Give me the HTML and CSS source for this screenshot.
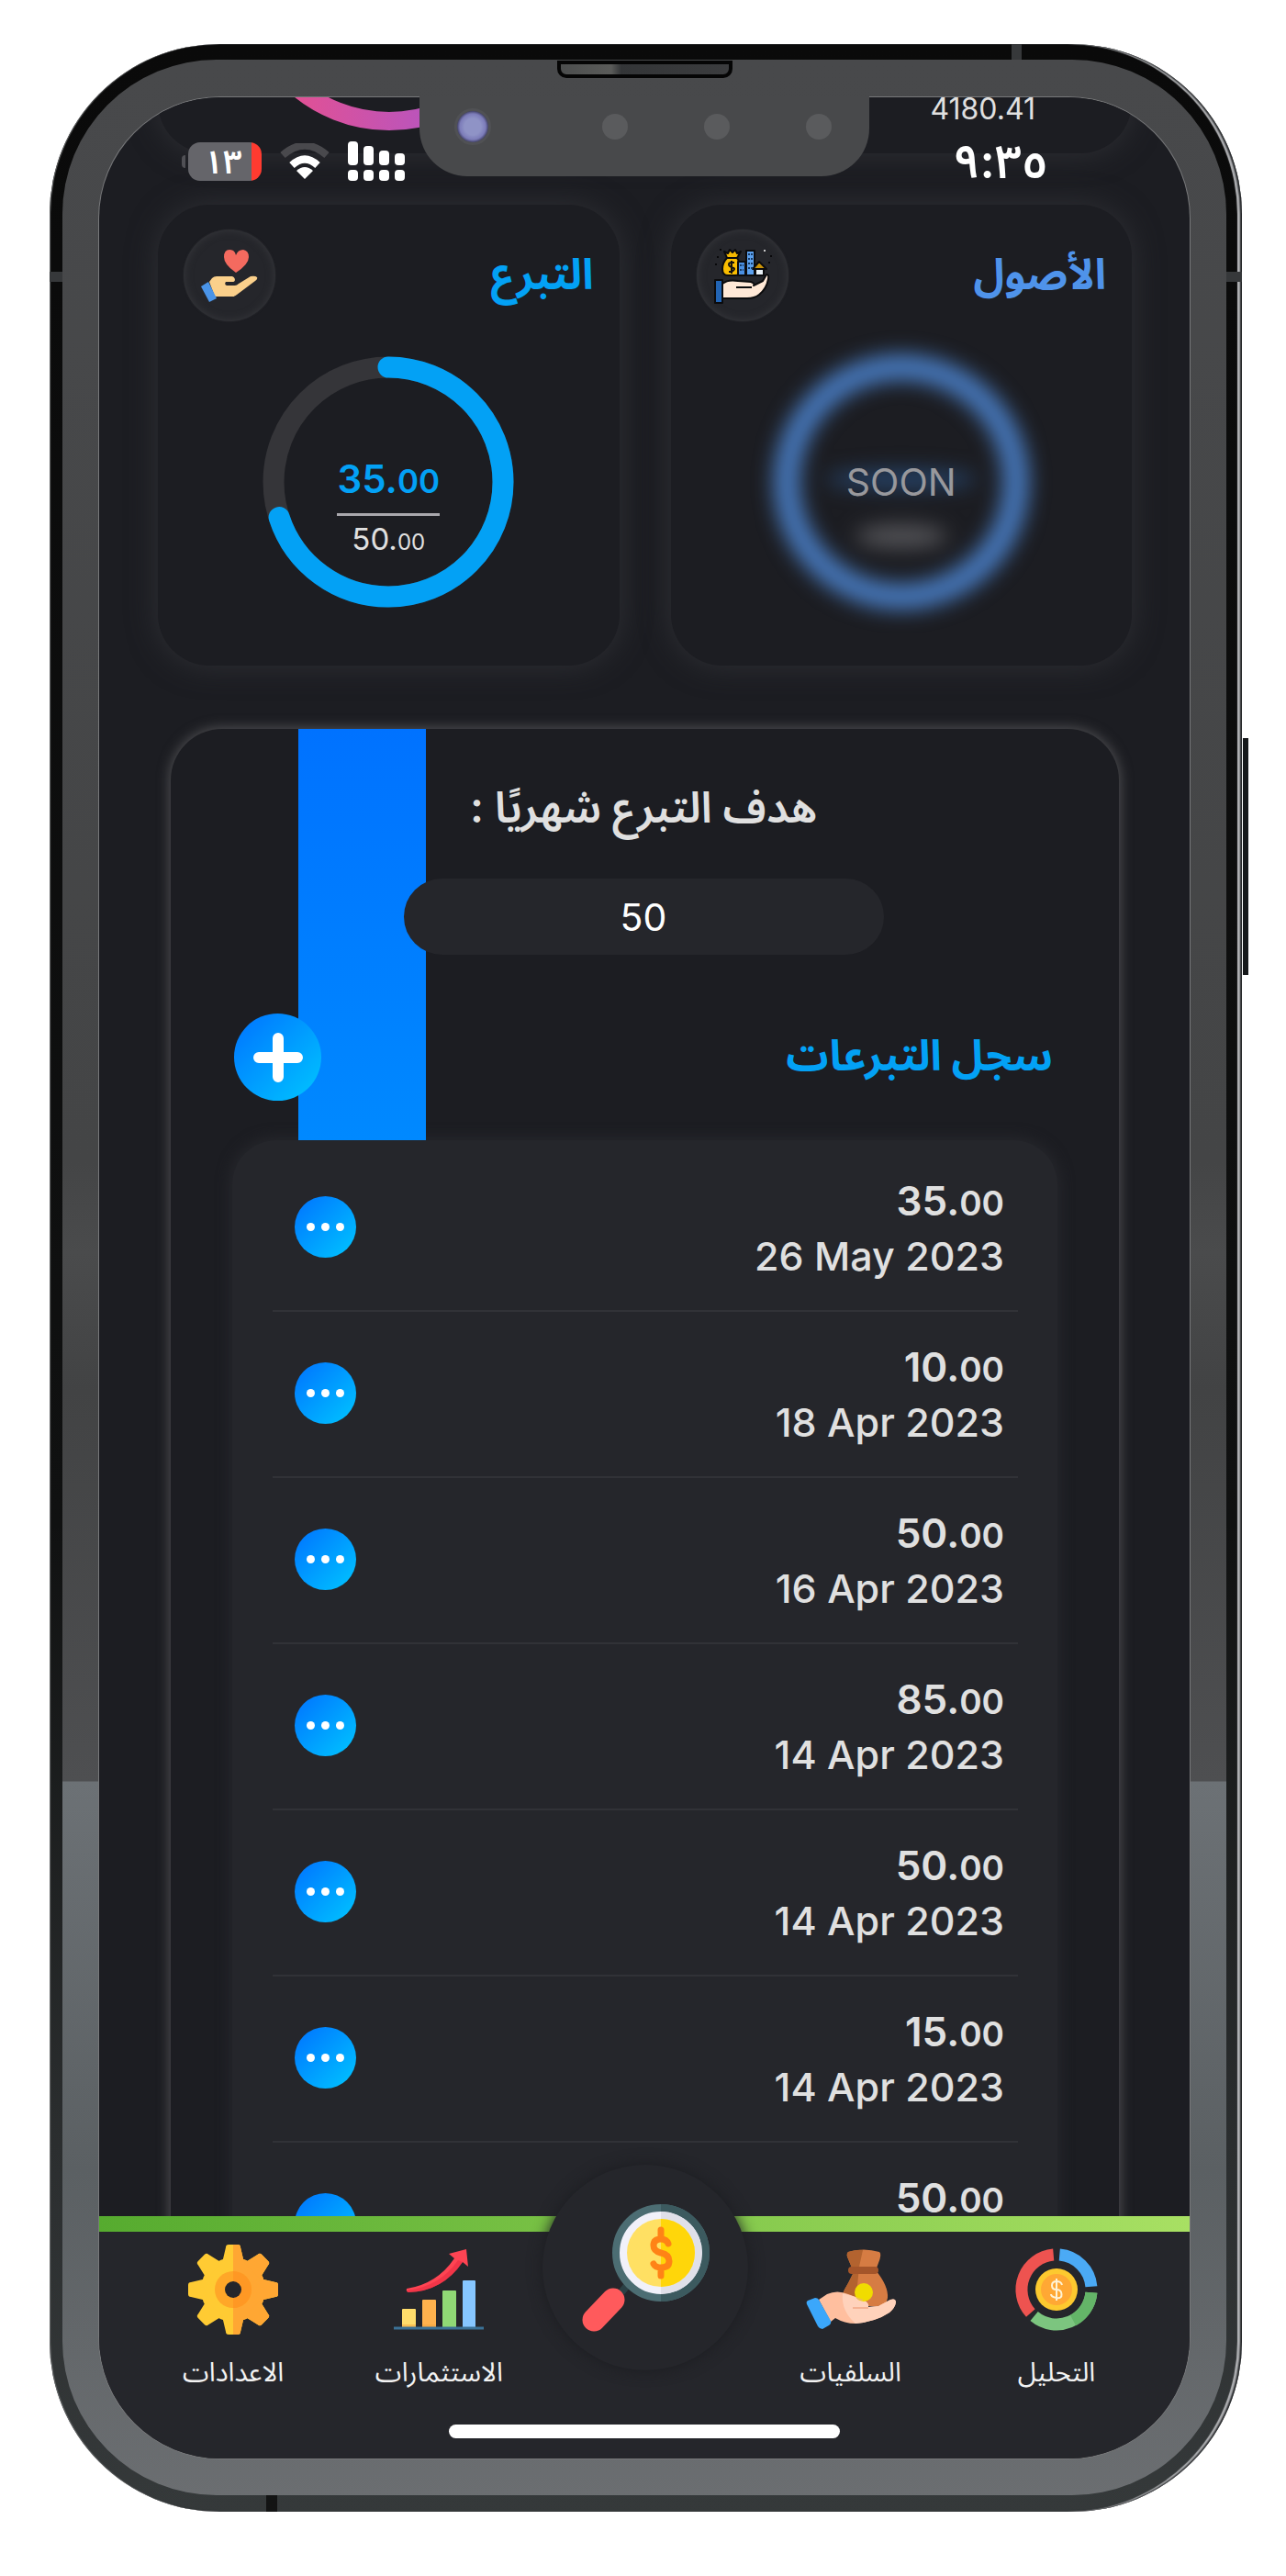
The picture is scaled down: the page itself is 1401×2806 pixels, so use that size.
FILE: index.html
```html
<!DOCTYPE html>
<html lang="ar" dir="rtl">
<head>
<meta charset="utf-8">
<meta name="viewport" content="width=device-width, initial-scale=1">
<title>التبرع</title>
<link rel="stylesheet" href="styles.css">
</head>
<body>
<svg class="defs" width="0" height="0" aria-hidden="true">
  <defs>
    <linearGradient id="pink" x1="0" y1="0" x2="1" y2="0">
      <stop offset="0" stop-color="#f04f86"/><stop offset="1" stop-color="#9a58dc"/>
    </linearGradient>
    <clipPath id="right-half"><rect x="49" y="0" width="49" height="98"/></clipPath>
    <g id="gear-shape">
      <circle cx="49" cy="49" r="35"/>
      <path id="tooth" d="M37 20 41 3Q41 0 44 0H54Q57 0 57 3L61 20Z"/>
      <use href="#tooth" transform="rotate(45 49 49)"/>
      <use href="#tooth" transform="rotate(90 49 49)"/>
      <use href="#tooth" transform="rotate(135 49 49)"/>
      <use href="#tooth" transform="rotate(180 49 49)"/>
      <use href="#tooth" transform="rotate(225 49 49)"/>
      <use href="#tooth" transform="rotate(270 49 49)"/>
      <use href="#tooth" transform="rotate(315 49 49)"/>
    </g>
  </defs>
</svg>

<div class="phone">
  <span class="band band-top"></span>
  <span class="band band-left"></span>
  <span class="band band-right"></span>
  <span class="band band-bottom"></span>
  <span class="side-button"></span>
  <div class="bezel">
    <span class="speaker"></span>
    <div class="screen">
      <main class="scroll">
        <section class="card summary">
          <p class="summary-total">4180.41</p>
          <svg class="summary-ring" viewBox="0 0 330 330" aria-hidden="true">
            <circle cx="165" cy="165" r="155" fill="none" stroke="url(#pink)" stroke-width="20"/>
          </svg>
        </section>

        <div class="cards">
          <section class="card tile">
            <header class="tile-head">
              <h2 class="tile-title tile-title-assets">الأصول</h2>
              <span class="badge">
                <svg viewBox="0 0 100 100" aria-hidden="true">
                  <g stroke="#0b0b0d" stroke-width="2" stroke-linejoin="round">
                    <path d="M33 31 30 24 34 26 36 22 39 25 42 22 44 26 48 24 44 31Z" fill="#f5b800"/>
                    <path d="M33 31H44Q48 37 48 43 48 50 42 50H34Q28 50 28 43 28 36 33 31Z" fill="#f9bd00"/>
                    <path d="M45 35H53V50H45Z" fill="#4a90e2"/>
                    <path d="M54 23H63V50H54Z" fill="#5ba0ee"/>
                    <path d="M64 43H73V50H64Z" fill="#e8f0f5"/>
                    <path d="M61 43 68 35 76 43Z" fill="#c99208"/>
                    <path d="M28 59Q34 54 45 56L59 57Q64 59 62 61L72 56 76 49Q79 49 78 54 76 65 68 71 63 75 55 75H28Z" fill="#ffe8d6"/>
                    <path d="M20 55H28V80H20Z" fill="#2264b4"/>
                    <path d="M43 63H60" fill="none"/>
                  </g>
                  <path d="M56 27H61M56 32H61M56 37H61M56 42H61M47 39H51M47 44H51" stroke="#173b66" stroke-width="2" stroke-dasharray="2 1"/>
                  <path d="M41 36H38Q35 36 35 38T38 41 41 43 38 46H35M38 34V48" fill="none" stroke="#111" stroke-width="2"/>
                  <circle cx="74" cy="23" r="1" fill="#fff"/>
                  <path d="M22 30H24M20 38H22M80 29H82M78 36H80M25 22H27" stroke="#08080a" stroke-width="2"/>
                </svg>
              </span>
            </header>
            <div class="gauge">
              <svg class="gauge-ring gauge-blurred" viewBox="0 0 330 330" aria-hidden="true">
                <circle cx="165" cy="165" r="125" fill="none" stroke="#4779bd" stroke-width="28"/>
                <ellipse cx="165" cy="162" rx="82" ry="10" fill="#27466e"/>
                <ellipse cx="165" cy="224" rx="50" ry="13" fill="#525256"/>
              </svg>
              <p class="soon">SOON</p>
            </div>
          </section>

          <section class="card tile">
            <header class="tile-head">
              <h2 class="tile-title">التبرع</h2>
              <span class="badge">
                <svg viewBox="0 0 100 100" aria-hidden="true">
                  <path d="M57 47Q44 38 44 30 44 22 50 22 56 22 57 28 59 22 65 22 71 23 71 30 71 38 57 47Z" fill="#f46a5f"/>
                  <path d="M28 57 31 53Q33 51 36 51H53Q56 52 56 55 56 57 53 57H46Q44 60 47 61H56Q58 61 60 59L73 51Q78 50 80 52 81 54 78 56L58 71Q56 73 53 73H34Z" fill="#fbd08b"/>
                  <path d="M19 62 27 57 36 75 28 79Z" fill="#4a94e8"/>
                </svg>
              </span>
            </header>
            <div class="gauge">
              <svg class="gauge-ring" viewBox="0 0 330 330" aria-hidden="true">
                <circle cx="165" cy="165" r="125" fill="none" stroke="#353539" stroke-width="23"/>
                <circle cx="165" cy="165" r="125" fill="none" stroke="#03a1f5" stroke-width="23" stroke-linecap="round" pathLength="100" stroke-dasharray="70 100" transform="rotate(-90 165 165)"/>
              </svg>
              <p class="ratio" dir="ltr">
                <strong class="ratio-value">35.<small>00</small></strong>
                <span class="ratio-goal">50.<small>00</small></span>
              </p>
            </div>
          </section>
        </div>

        <section class="panel">
          <div class="panel-head">
            <label class="goal-label" for="goal">هدف التبرع شهريًا :</label>
            <input class="goal-input" id="goal" type="text" inputmode="numeric" value="50">
            <div class="log-head">
              <h2 class="log-title">سجل التبرعات</h2>
              <button class="add" type="button" aria-label="إضافة">
                <svg viewBox="0 0 54 54" aria-hidden="true"><path d="M27 6V48M6 27H48" stroke="#fff" stroke-width="12" stroke-linecap="round"/></svg>
              </button>
            </div>
          </div>
          <ul class="log">
            <li class="entry">
              <p class="entry-text" dir="ltr"><strong>35.<small>00</small></strong><span>26 May 2023</span></p>
              <button class="more" type="button" aria-label="المزيد"><i></i><i></i><i></i></button>
            </li>
            <li class="entry">
              <p class="entry-text" dir="ltr"><strong>10.<small>00</small></strong><span>18 Apr 2023</span></p>
              <button class="more" type="button" aria-label="المزيد"><i></i><i></i><i></i></button>
            </li>
            <li class="entry">
              <p class="entry-text" dir="ltr"><strong>50.<small>00</small></strong><span>16 Apr 2023</span></p>
              <button class="more" type="button" aria-label="المزيد"><i></i><i></i><i></i></button>
            </li>
            <li class="entry">
              <p class="entry-text" dir="ltr"><strong>85.<small>00</small></strong><span>14 Apr 2023</span></p>
              <button class="more" type="button" aria-label="المزيد"><i></i><i></i><i></i></button>
            </li>
            <li class="entry">
              <p class="entry-text" dir="ltr"><strong>50.<small>00</small></strong><span>14 Apr 2023</span></p>
              <button class="more" type="button" aria-label="المزيد"><i></i><i></i><i></i></button>
            </li>
            <li class="entry">
              <p class="entry-text" dir="ltr"><strong>15.<small>00</small></strong><span>14 Apr 2023</span></p>
              <button class="more" type="button" aria-label="المزيد"><i></i><i></i><i></i></button>
            </li>
            <li class="entry">
              <p class="entry-text" dir="ltr"><strong>50.<small>00</small></strong></p>
              <button class="more" type="button" aria-label="المزيد"><i></i><i></i><i></i></button>
            </li>
          </ul>
        </section>
      </main>

      <nav class="tabs">
        <div class="tab-row">
          <a class="tab" href="#analysis">
            <svg viewBox="0 0 98 98" aria-hidden="true">
              <g fill="none" stroke-width="13" transform="translate(49 49)">
                <path d="M3.300 -37.900A38 38 0 0 1 37.900 -3.300" stroke="#4baaf5"/>
                <path d="M37.900 3.300A38 38 0 0 1 -24.400 29.100" stroke="#7cc57f"/>
                <path d="M37.900 3.300A38 38 0 0 1 18 33.500" stroke="#64b568"/>
                <path d="M-28.200 25.500A38 38 0 0 1 -3.300 -37.900" stroke="#ee5350"/>
              </g>
              <circle cx="49" cy="49" r="23" fill="#fdc92f"/>
              <circle cx="49" cy="49" r="17" fill="#ffa834"/>
              <path d="M55 44Q54 40 49 40 44 40 44 44.500T49 49 54.500 54 49 58 43 54M49 37V61" fill="none" stroke="#fff3d6" stroke-width="2"/>
            </svg>
            <span>التحليل</span>
          </a>
          <a class="tab" href="#loans">
            <svg viewBox="0 0 98 98" aria-hidden="true">
              <path d="M46 8Q63 3 80 8 83 10 79 20L76 28Q90 45 89 58 88 67 78 67H38Q37 56 46 42L52 30 47 18Q43 10 46 8Z" fill="#d67c43"/>
              <path d="M46 8Q55 5 62 6L58 24 56 45 54 67H38Q37 56 46 42L52 30 47 18Q43 10 46 8Z" fill="#b3632f"/>
              <rect x="46" y="24" width="33" height="8" rx="4" fill="#a4552a"/>
              <path d="M14 60 23 54Q34 49 46 54L62 60Q69 63 68 68L79 67 92 60Q98 58 98 63 97 69 91 74 76 84 54 86 42 86 32 80L27 84Z" fill="#ffbf9f"/>
              <path d="M40 53Q55 57 62 60 69 63 68 68L79 67 92 60Q98 58 98 63 97 69 91 74 76 84 54 86 38 72 40 53Z" fill="#ffd2bb"/>
              <circle cx="63" cy="52" r="10" fill="#f0dc00"/>
              <path d="M54 57 63 60Q58 63 54 57Z" fill="#eebe50"/>
              <path d="M51 69H68" stroke="#f5b293" stroke-width="2"/>
              <path d="M2 61 10 58Q13 58 14 60L27 83Q28 86 25 88L18 92Q15 92 13 89L1 65Q0 62 2 61Z" fill="#3ba7fb"/>
            </svg>
            <span>السلفيات</span>
          </a>
          <a class="tab tab-main" href="#home" aria-label="الرئيسية">
            <svg viewBox="0 0 140 140" aria-hidden="true">
              <path d="M53 86 44 97" stroke="#2b4045" stroke-width="8"/>
              <path d="M35 105 14 127" stroke="#ff5a5c" stroke-width="25" stroke-linecap="round"/>
              <circle cx="87" cy="54" r="49" fill="#f1f1fa" stroke="#4c6d73" stroke-width="8"/>
              <path d="M87 1A53 53 0 0 1 87 107V99A45 45 0 0 0 87 9Z" fill="#3c5a5f"/>
              <path d="M87 9A45 45 0 0 1 87 99Z" fill="#e0e0e9"/>
              <circle cx="87" cy="54" r="37" fill="#ffe063"/>
              <path d="M87 17A37 37 0 0 1 87 91Z" fill="#ffd60a"/>
              <path d="M95 44Q93 39 87 39 79 39 79 46 79 52 87 54 96 56 96 63 96 70 87 70 81 70 79 66M87 29V39M87 70V79" fill="none" stroke="#ff8316" stroke-width="7" stroke-linecap="round"/>
            </svg>
          </a>
          <a class="tab" href="#investments">
            <svg viewBox="0 0 98 98" aria-hidden="true">
              <rect x="9" y="70" width="15" height="21" rx="1" fill="#ffdd6b"/>
              <rect x="31" y="60" width="15" height="31" rx="1" fill="#ffb24d"/>
              <rect x="53" y="50" width="15" height="41" rx="1" fill="#90d975"/>
              <rect x="75" y="39" width="14" height="52" rx="1" fill="#86c6ff"/>
              <path d="M9 87H24V91H9ZM31 87H46V91H31Z" fill="#f3a43c" opacity=".5"/>
              <path d="M0 91H98" stroke="#3b7196" stroke-width="3"/>
              <path d="M14 48Q47 43 66 15L60 10 79 5 81 24 75 19Q53 51 16 52 13 51 14 48Z" fill="#ff4453"/>
              <path d="M14 50Q50 46 70 17L75 19Q53 51 16 52Z" fill="#e92c41" opacity=".6"/>
            </svg>
            <span>الاستثمارات</span>
          </a>
          <a class="tab" href="#settings">
            <svg viewBox="0 0 98 98" aria-hidden="true">
              <use href="#gear-shape" fill="#ffcb33"/>
              <use href="#gear-shape" fill="#ffa733" clip-path="url(#right-half)"/>
              <circle cx="49" cy="49" r="20" fill="#ffa728"/>
              <path d="M49 29A20 20 0 0 1 49 69Z" fill="#ff9824"/>
              <circle cx="49" cy="49" r="9" fill="#25262b"/>
            </svg>
            <span>الاعدادات</span>
          </a>
        </div>
        <span class="home-bar"></span>
      </nav>

      <div class="status">
        <time class="clock" dir="ltr">٩:٣٥</time>
        <div class="indicators">
          <svg class="signal" viewBox="0 0 62 44" aria-hidden="true">
            <g fill="#fff">
              <rect x="0" y="0" width="11" height="26" rx="4"/><rect x="17" y="5" width="11" height="21" rx="4"/>
              <rect x="34" y="10" width="11" height="16" rx="4"/><rect x="51" y="13" width="11" height="13" rx="4"/>
              <rect x="0" y="31" width="11" height="12" rx="4"/><rect x="17" y="31" width="11" height="12" rx="4"/>
              <rect x="34" y="31" width="11" height="12" rx="4"/><rect x="51" y="31" width="11" height="12" rx="4"/>
            </g>
          </svg>
          <svg class="wifi" viewBox="0 0 54 40" aria-hidden="true">
            <path d="M3 13Q27 -8 51 13" fill="none" stroke="#49494d" stroke-width="8"/>
            <path d="M13 24Q27 11 41 24" fill="none" stroke="#fff" stroke-width="8"/>
            <path d="M27 39 18 30Q27 22 36 30Z" fill="#fff"/>
          </svg>
          <span class="battery"><b dir="ltr">١٣</b></span>
        </div>
      </div>
    </div>
    <div class="notch">
      <span class="camera"></span><span class="sensor"></span><span class="sensor"></span><span class="sensor"></span>
    </div>
  </div>
</div>
</body>
</html>
```
FILE: styles.css
```css
* { box-sizing: border-box; }

:root {
  --bg: #1c1d22;
  --raised: #25262b;
  --blue: #03a1f5;
  --ink: #e0e0e0;
}

body {
  margin: 0;
  height: 100vh;
  padding: 48px 48px 70px 54px;
  display: flex;
  background: #fff;
  color: var(--ink);
  font-family: Inter, "Noto Sans Arabic", "Noto Sans", "DejaVu Sans", sans-serif;
}

h2, p, ul { margin: 0; padding: 0; }
ul { list-style: none; }
button { border: 0; padding: 0; font: inherit; cursor: pointer; }
small { font-size: inherit; line-height: 1; }
.defs { position: absolute; }

/* Device shell */
.phone {
  position: relative;
  flex: 1;
  min-height: 0;
  display: flex;
  padding: 17px 17px 18px 14px;
  border-radius: 185px;
  background: linear-gradient(#0a0a0a, #101111 60%, #2b2e2f 85%, #35393a);
  box-shadow: inset -2px 0 2px #1d1f21, inset -5px 0 1px #b9babd, inset 1px 0 1px #6d6f70;
}

.bezel {
  position: relative;
  flex: 1;
  min-width: 0;
  display: flex;
  padding: 41px 40px 40px 40px;
  border-radius: 168px;
  background: linear-gradient(#48494b 0, #444546 1200px, #4a4b4c 1300px, #424344 1450px, #4e4f51 1875px, #6c7175 1876px, #5b6063 2300px, #6b6e71 100%);
}

.band { position: absolute; background: #36383a; }
.band-top { top: 0; right: 240px; width: 11px; height: 17px; }
.band-left { top: 248px; left: 0; width: 14px; height: 11px; }
.band-right { top: 248px; right: 0; width: 17px; height: 11px; }
.band-bottom { bottom: 0; left: 236px; width: 12px; height: 18px; background: #131414; }

.side-button {
  position: absolute;
  top: 756px;
  right: -7px;
  width: 6px;
  height: 258px;
  background: #16181a;
}

.speaker {
  position: absolute;
  top: 1px;
  left: calc(50% - 95px);
  width: 191px;
  height: 19px;
  border: 4px solid #050505;
  border-radius: 0 0 10px 10px;
  background: linear-gradient(90deg, #4c4e4e, #5a5b59 30%, #333537 36%, #3b3c3e);
}

.notch {
  position: absolute;
  top: 40px;
  left: calc(50% - 245px);
  width: 490px;
  height: 87px;
  padding: 0 41px 22px 38px;
  display: flex;
  align-items: center;
  justify-content: space-between;
  direction: ltr;
  border-radius: 0 0 52px 52px;
  background: #48494b;
}

.camera {
  width: 40px;
  height: 40px;
  margin-right: 38px;
  border: 3px solid #505154;
  border-radius: 50%;
  background: radial-gradient(circle, #8f93c6 0 9px, #7c7cb9 14px, #44446a 17px);
}

.sensor { width: 28px; height: 28px; border-radius: 50%; background: #5a5b5d; }

.screen {
  position: relative;
  flex: 1;
  min-width: 0;
  display: flex;
  flex-direction: column;
  overflow: hidden;
  border-radius: 132px;
  background: var(--bg);
  box-shadow: 0 0 0 1px #77787a;
}

/* Status bar */
.status {
  position: absolute;
  inset: 48px 154px auto 97px;
  display: flex;
  align-items: center;
  justify-content: space-between;
  height: 44px;
  color: #fff;
}

.clock { font-size: 51px; line-height: 44px; font-weight: 600; }
.indicators { display: flex; align-items: center; gap: 20px; }
.signal { width: 62px; height: 44px; }
.wifi { width: 54px; height: 40px; }

.battery {
  position: relative;
  width: 80px;
  height: 42px;
  display: grid;
  place-items: center;
  border-radius: 13px;
  background: linear-gradient(270deg, #ff3b30 11px, #65656a 11px);
  font-size: 36px;
  line-height: 42px;
}

.battery b { font-weight: 600; padding-right: 4px; }

.battery::after {
  content: "";
  position: absolute;
  left: -7px;
  top: 14px;
  width: 4px;
  height: 14px;
  border-radius: 4px 0 0 4px;
  background: #505055;
}

/* Scrolling content */
.scroll {
  flex: 1 1 0;
  min-height: 0;
  overflow: hidden;
  display: flex;
  flex-direction: column;
}

.card {
  border-radius: 56px;
  background: var(--bg);
  box-shadow: 0 0 32px #2f3035;
}

.summary {
  flex: none;
  height: 400px;
  margin: -339px 63px 56px 64px;
  padding: 0 105px 25px 87px;
  display: flex;
  align-items: flex-end;
  justify-content: space-between;
}

.summary-total { padding-bottom: 11px; font-size: 32px; line-height: 24px; }
.summary-ring { width: 330px; height: 330px; }

.cards {
  flex: none;
  display: grid;
  grid-template-columns: 1fr 1fr;
  gap: 56px;
  margin: 0 63px 69px 64px;
}

.tile { padding: 27px 28px 25px; }
.tile-head { display: flex; align-items: center; justify-content: space-between; height: 100px; }
.tile-title { padding-bottom: 4px; font-size: 46px; line-height: 60px; font-weight: 700; color: var(--blue); }
.tile-title-assets { color: #4f93ea; }

.badge {
  width: 100px;
  height: 100px;
  border-radius: 50%;
  background: var(--raised);
  box-shadow: inset 0 0 10px #38393d, 0 0 2px #2d2e32;
}

.badge svg { display: block; }

.gauge { display: grid; place-items: center; height: 350px; }
.gauge > * { grid-area: 1 / 1; }
.gauge-ring { width: 330px; height: 330px; }
.gauge-blurred { filter: blur(11px); }
.soon { position: relative; font-size: 41px; line-height: 48px; color: #98989c; }

.ratio { display: flex; flex-direction: column; align-items: center; padding-top: 53px; }
.ratio-value {
  padding-bottom: 12px;
  border-bottom: 3px solid #a9a8ad;
  font-size: 42px;
  line-height: 50px;
  font-weight: 600;
  color: var(--blue);
}
.ratio-value small { font-size: 35px; }
.ratio-goal { padding-top: 5px; font-size: 33px; line-height: 40px; }
.ratio-goal small { font-size: 24px; }

/* Donation panel */
.panel {
  flex: none;
  margin: 0 77px 0 78px;
  border-radius: 56px 56px 0 0;
  background: var(--bg);
  box-shadow: 0 0 14px 1px #525255;
}

.panel-head {
  position: relative;
  display: flex;
  flex-direction: column;
  align-items: center;
  padding: 55px 72px 43px 69px;
  background: linear-gradient(#0072ff, #0089ff) 139px 0 / 139px 100% no-repeat;
}

.goal-label { font-size: 47px; line-height: 60px; font-weight: 600; }

.goal-input {
  width: 523px;
  max-width: 100%;
  height: 83px;
  margin: 48px 0 64px;
  border: 0;
  border-radius: 42px;
  background: var(--raised);
  color: #fff;
  font: 400 41px/48px Inter, sans-serif;
  text-align: center;
}

.log-head { align-self: stretch; display: flex; align-items: center; justify-content: space-between; }
.log-title { padding-bottom: 6px; font-size: 46px; line-height: 60px; font-weight: 700; color: var(--blue); }

.add {
  width: 95px;
  height: 95px;
  display: grid;
  place-items: center;
  border-radius: 50%;
  background: linear-gradient(135deg, #0072ff, #00c6ff);
}

.add svg { width: 54px; height: 54px; }

.log {
  margin: 0 67px;
  padding: 6px 43px 0 44px;
  border-radius: 48px 48px 0 0;
  background: var(--raised);
  box-shadow: 0 0 14px 4px #25262b;
}

.entry {
  display: flex;
  align-items: flex-start;
  justify-content: space-between;
  height: 181px;
  padding: 38px 15px 0 24px;
  border-bottom: 2px solid #313237;
}

.entry-text { display: flex; flex-direction: column; gap: 8px; text-align: right; font-size: 43px; line-height: 61px; font-weight: 450; }
.entry-text strong { font-size: 44px; line-height: 44px; font-weight: 600; }
.entry-text small { font-size: 37px; }

.more {
  width: 67px;
  height: 67px;
  margin-top: 17px;
  display: flex;
  align-items: center;
  justify-content: center;
  gap: 7px;
  border-radius: 50%;
  background: linear-gradient(135deg, #0072ff, #00c6ff);
}

.more i { width: 9px; height: 9px; border-radius: 50%; background: #fff; }

/* Tab bar */
.tabs { position: relative; flex: none; background: var(--raised); }

.tabs::before {
  content: "";
  display: block;
  height: 17px;
  background: linear-gradient(90deg, #56ab2f, #a8e063);
}

.tab-row {
  display: grid;
  grid-template-columns: repeat(5, 1fr);
  justify-items: center;
  align-items: start;
  padding: 14px 33px 0 34px;
  height: 210px;
}

.tab {
  display: flex;
  flex-direction: column;
  align-items: center;
  gap: 19px;
  color: #f2f2f2;
  font-size: 29px;
  line-height: 44px;
  text-decoration: none;
}

.tab svg { width: 98px; height: 98px; }

.tab-main {
  justify-content: center;
  width: 224px;
  height: 224px;
  margin-top: -87px;
  border-radius: 50%;
  background: var(--raised);
  box-shadow: 0 0 16px #1c1d21;
}

.tab-main svg { width: 140px; height: 140px; }

.home-bar {
  display: block;
  width: 426px;
  height: 15px;
  margin: 0 auto 22px;
  border-radius: 8px;
  background: #fff;
}
```
